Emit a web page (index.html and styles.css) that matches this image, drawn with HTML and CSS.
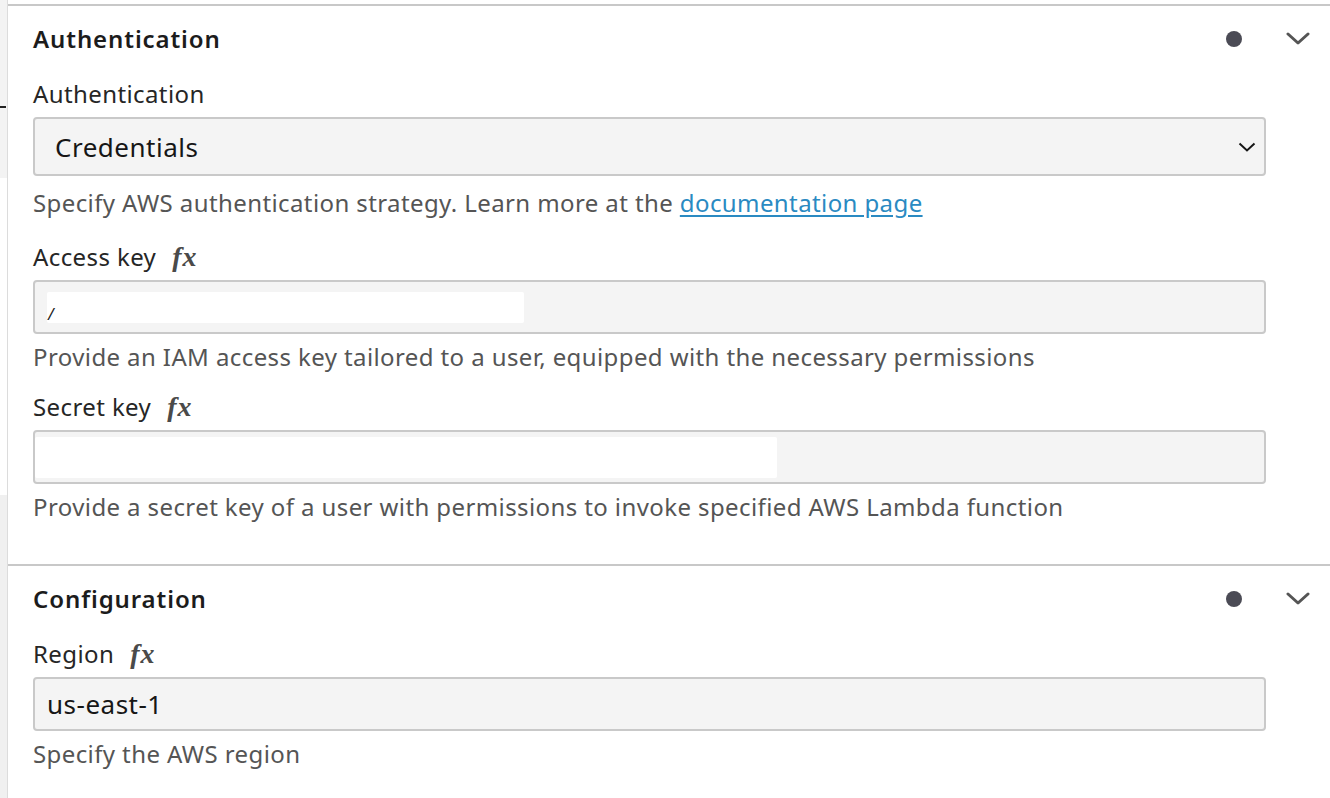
FILE: index.html
```html
<!DOCTYPE html>
<html lang="en">
<head>
<meta charset="utf-8">
<title>AWS Lambda connector</title>
<link rel="stylesheet" href="styles.css">
</head>
<body>
<div class="page">
  <div class="rail">
    <div class="rail-top"><span class="rail-tick"></span></div>
    <div class="rail-mid"></div>
    <div class="rail-bottom"></div>
  </div>
  <main class="panel">
    <section class="group group-auth">
      <header class="group-head">
        <h2 class="group-title">Authentication</h2>
        <div class="group-tools">
          <span class="dot"></span>
          <svg class="collapse" width="24" height="14" viewBox="0 0 24 14"><path d="M2 2 L12 11 L22 2" fill="none" stroke="#555" stroke-width="3" stroke-linecap="round" stroke-linejoin="round"/></svg>
        </div>
      </header>

      <div class="field field-select">
        <label class="label">Authentication</label>
        <div class="select">
          <span class="value">Credentials</span>
          <svg class="select-arrow" width="18" height="10" viewBox="0 0 18 10"><path d="M1.5 1.5 L9 8.5 L16.5 1.5" fill="none" stroke="#161616" stroke-width="2"/></svg>
        </div>
        <p class="helper">Specify AWS authentication strategy. Learn more at the <a class="link" href="#">documentation page</a></p>
      </div>

      <div class="field">
        <label class="label">Access key <span class="fx">fx</span></label>
        <div class="input input-access">
          <span class="mask mask-access"><span class="caret-char">/</span></span>
        </div>
        <p class="helper">Provide an IAM access key tailored to a user, equipped with the necessary permissions</p>
      </div>

      <div class="field">
        <label class="label">Secret key <span class="fx">fx</span></label>
        <div class="input input-secret">
          <span class="mask mask-secret"></span>
        </div>
        <p class="helper">Provide a secret key of a user with permissions to invoke specified AWS Lambda function</p>
      </div>
    </section>

    <section class="group group-config">
      <header class="group-head">
        <h2 class="group-title">Configuration</h2>
        <div class="group-tools">
          <span class="dot"></span>
          <svg class="collapse" width="24" height="14" viewBox="0 0 24 14"><path d="M2 2 L12 11 L22 2" fill="none" stroke="#555" stroke-width="3" stroke-linecap="round" stroke-linejoin="round"/></svg>
        </div>
      </header>

      <div class="field">
        <label class="label">Region <span class="fx">fx</span></label>
        <div class="input input-region">
          <span class="value value-input">us-east-1</span>
        </div>
        <p class="helper">Specify the AWS region</p>
      </div>
    </section>
  </main>
</div>
</body>
</html>
```

FILE: styles.css
```css
* { box-sizing: border-box; }

html, body {
  margin: 0;
  padding: 0;
  background: #ffffff;
}

body {
  font-family: "Noto Sans", "Open Sans", sans-serif;
  color: #161616;
  width: 1330px;
  height: 798px;
  overflow: hidden;
}

.page {
  display: flex;
  height: 798px;
}

/* thin strip of the page behind the panel */
.rail {
  width: 8px;
  flex: none;
  display: flex;
  flex-direction: column;
  border-right: 1px solid #dcdcdc;
}
.rail-top {
  height: 178px;
  background: #f3f3f3;
  position: relative;
}
.rail-tick {
  position: absolute;
  left: 0;
  top: 106px;
  width: 6px;
  height: 2px;
  background: #222;
}
.rail-mid {
  height: 317px;
  background: #ffffff;
}
.rail-bottom {
  flex: 1;
  background: #f0f0f0;
}

.panel {
  flex: 1;
  display: flex;
  flex-direction: column;
  padding-top: 4px;
}

.group {
  border-top: 2px solid #c8c8c8;
  padding: 16px 64px 40px 25px;
}
.group-config {
  padding-bottom: 0;
}

.group-head {
  display: flex;
  align-items: center;
  justify-content: space-between;
  height: 34px;
  margin-bottom: 21px;
  margin-right: -52px;
}

.group-title {
  margin: 0;
  font-size: 24px;
  line-height: 34px;
  font-weight: 600;
  letter-spacing: 0.9px;
  color: #1c1c1c;
}

.group-tools {
  display: flex;
  align-items: center;
  gap: 44px;
  padding-right: 8px;
}

.dot {
  width: 16px;
  height: 16px;
  border-radius: 50%;
  background: #4b4b55;
}

.collapse { display: block; }

.field {
  display: flex;
  flex-direction: column;
  margin-bottom: 16px;
}
.field:last-child { margin-bottom: 0; }

.field-select { margin-bottom: 20px; }

.label {
  font-size: 24px;
  line-height: 34px;
  letter-spacing: 0.4px;
  color: #262626;
  margin-bottom: 6px;
  display: flex;
  align-items: center;
}

.fx {
  font-family: "Liberation Serif", serif;
  font-style: italic;
  font-weight: 700;
  font-size: 28px;
  color: #4a4a4a;
  margin-left: 16px;
  letter-spacing: 1px;
}

.select, .input {
  background: #f4f4f4;
  border: 2px solid #c9c9c9;
  border-radius: 4px;
  display: flex;
  align-items: center;
}

.select {
  height: 59px;
  padding: 0 8px 0 20px;
  justify-content: space-between;
}

.input {
  height: 54px;
  padding: 0 12px;
}
.input-secret { padding-left: 0; }

.value {
  font-size: 26px;
  letter-spacing: 0.5px;
  color: #161616;
}
.value-input { padding-left: 0; }

.mask {
  display: block;
  background: #ffffff;
  border-radius: 2px;
}
.mask-access {
  width: 477px;
  height: 31px;
  position: relative;
}
.caret-char {
  position: absolute;
  left: 1px;
  bottom: -2px;
  font-size: 16px;
  font-style: italic;
  color: #222;
}
.mask-secret {
  width: 742px;
  height: 41px;
}

.select-arrow { display: block; }

.helper {
  margin: 6px 0 0;
  font-size: 24px;
  line-height: 34px;
  letter-spacing: 0.4px;
  color: #555555;
}
.field-select .helper { margin-top: 10px; }

.link {
  color: #2a8ac2;
  text-decoration: underline;
  text-underline-offset: 3px;
}
```
